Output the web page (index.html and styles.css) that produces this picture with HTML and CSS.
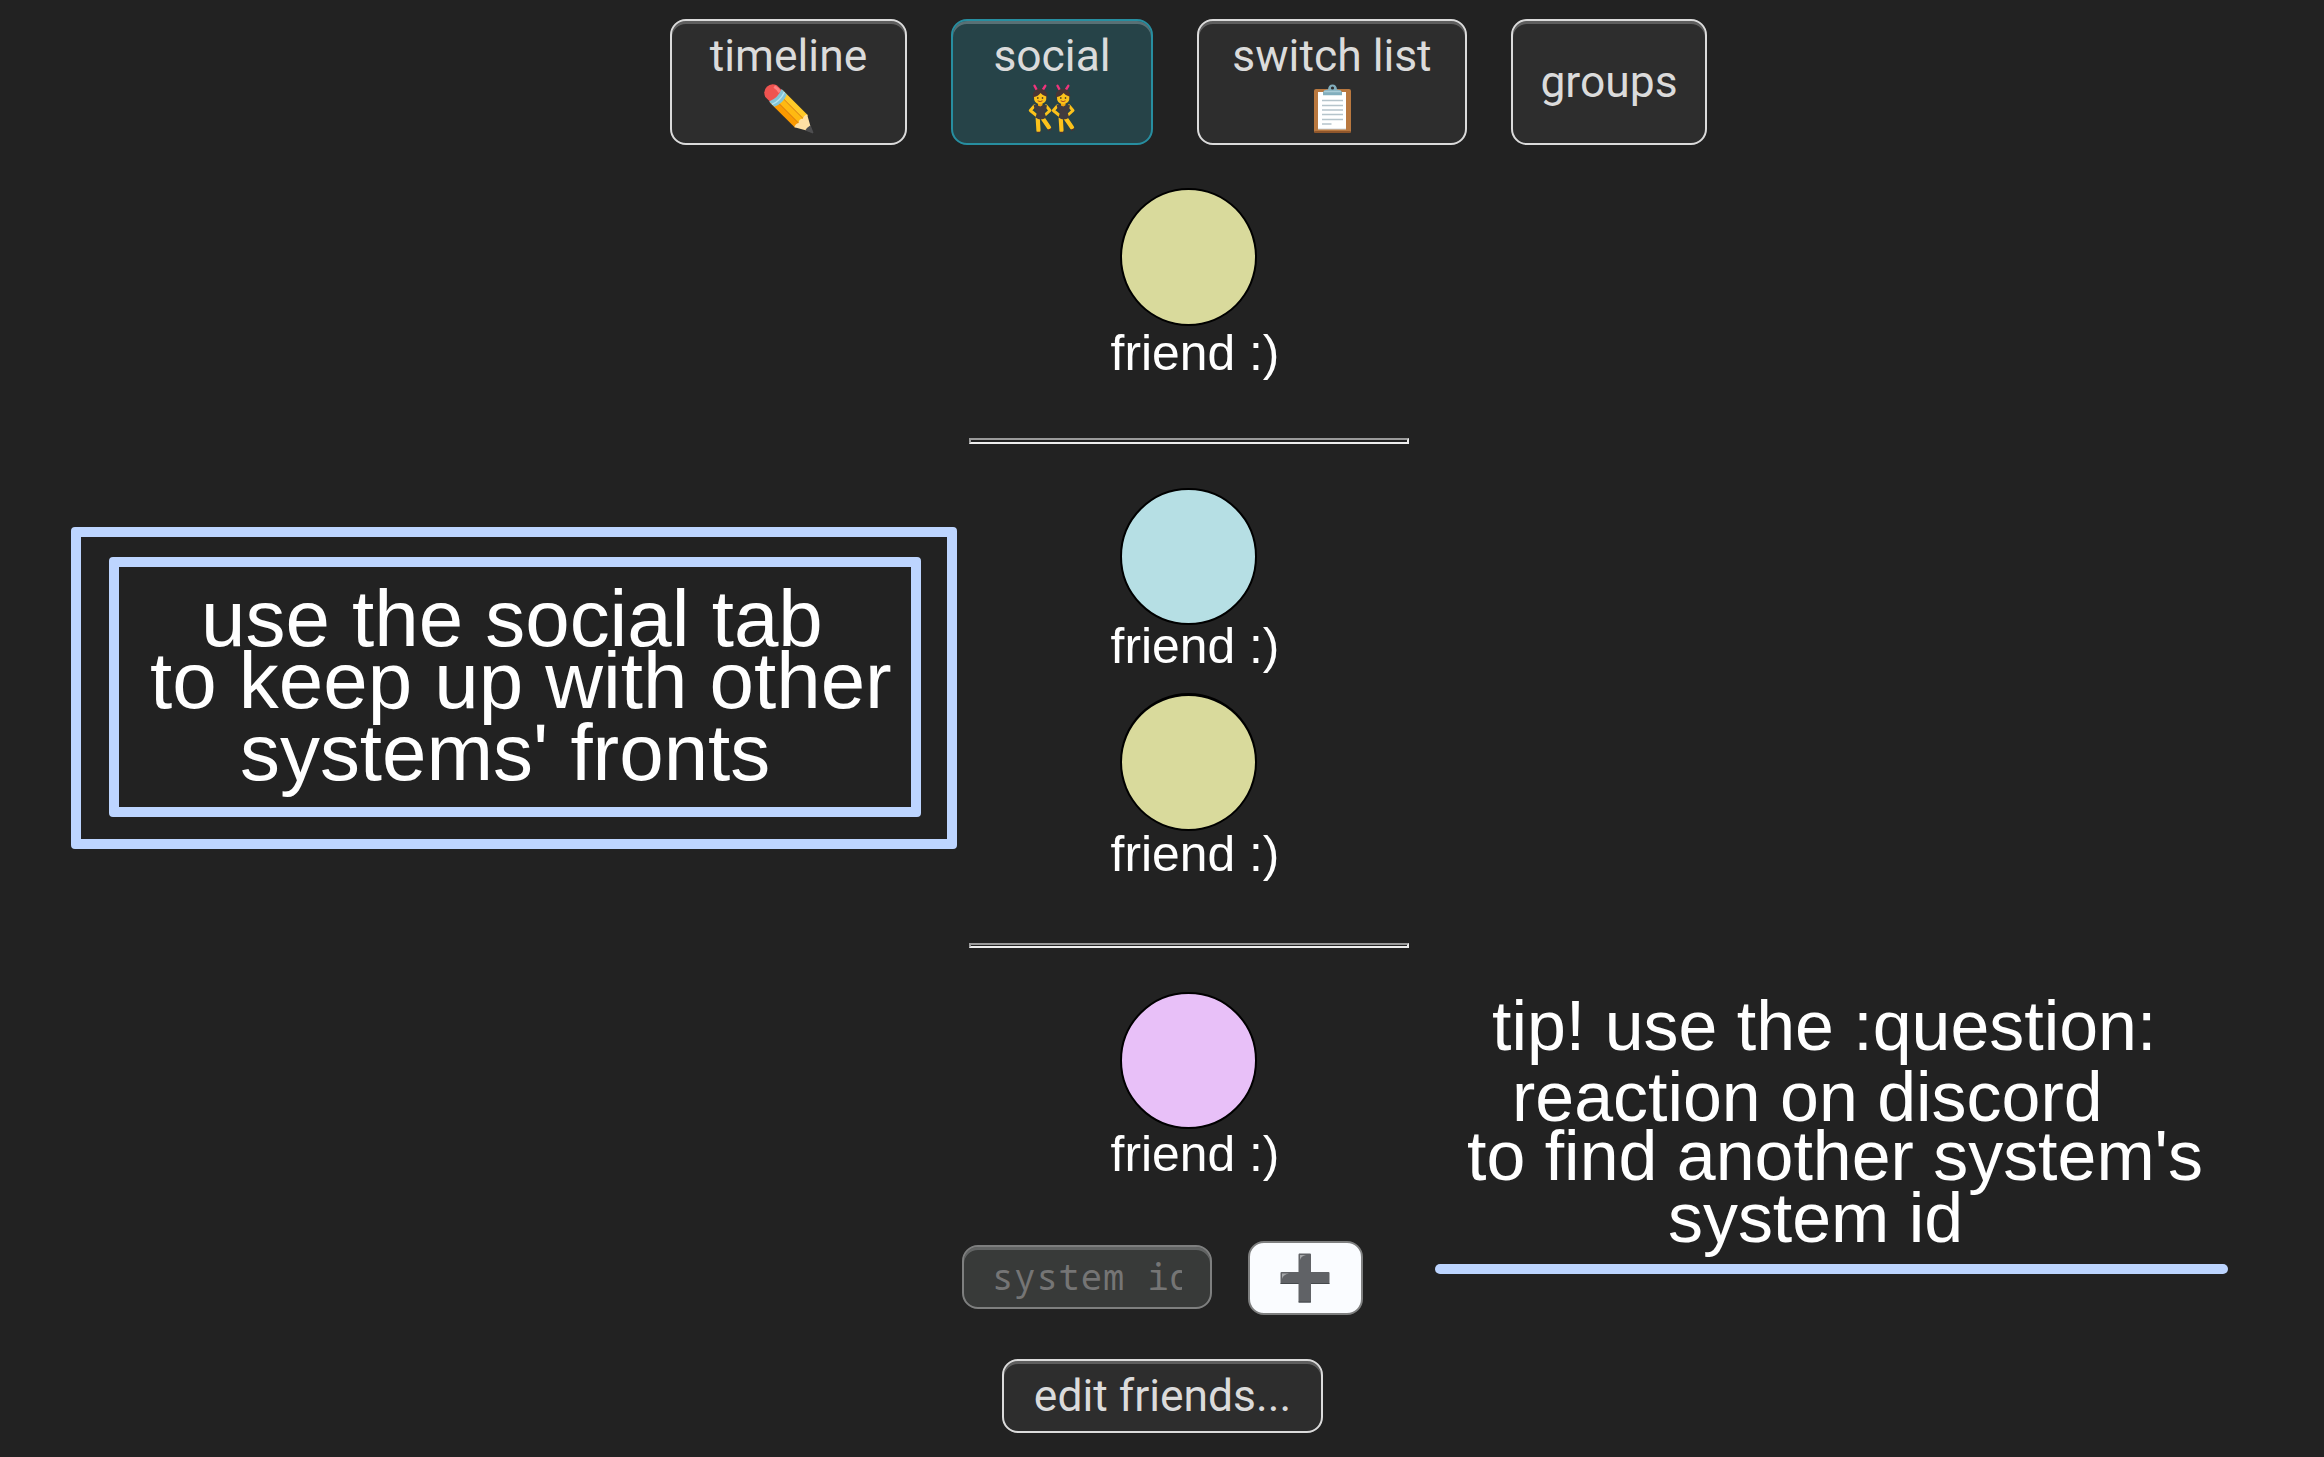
FILE: index.html
```html
<!DOCTYPE html>
<html lang="en">
<head>
<meta charset="utf-8">
<title>social</title>
<link rel="stylesheet" href="styles.css">
</head>
<body>
<nav class="tabs">
  <button class="btn tab tab-timeline"><span>timeline</span>
    <svg class="emoji" viewBox="0 0 50 50">
      <g transform="translate(8.5 8.5) rotate(45)">
        <path d="M5-9H41V-3.2H5z" fill="#ffca28"/>
        <path d="M5-3.2H41V3.2H5z" fill="#ffb911"/>
        <path d="M5 3.2H41V9H5z" fill="#fb9a00"/>
        <path d="M5-3.4H42M5 3H42" stroke="#f08a17" stroke-width=".8"/>
        <path d="M-2-8.2H8V8.2H-2Q-8 6-8 0T-2-8.2z" fill="#ef5350"/>
        <path d="M-3-5.5Q1-6.500 5-5.500" stroke="#ff8080" stroke-width="3" fill="none"/>
        <path d="M4-8.8Q8 0 4 8.8H11.5Q15 0 11.5-8.8z" fill="#82c4d5"/>
        <path d="M8-8.8Q11.5 0 8 8.8" stroke="#b5e3ee" stroke-width="1.5" fill="none"/>
        <path d="M40-9L56 0 40 9Q38 6 40 3Q37 0 40-3Q38-6 40-9z" fill="#ffe0a3"/>
        <path d="M50-3.8L57-.8Q58 0 57 .8L50 3.8Q49 0 50-3.8z" fill="#4e4e50"/>
      </g>
    </svg>
  </button>
  <button class="btn tab tab-social active"><span>social</span>
    <svg class="emoji" viewBox="0 0 50 50">
      <defs>
        <g id="dancer">
          <path d="M8 5.500L6 1.800M14.500 5.500L16.800 1.800" stroke="#f0347c" stroke-width="2.400" stroke-linecap="round"/>
          <ellipse cx="11.500" cy="11.500" rx="7.200" ry="6.800" fill="#4a3434"/>
          <path d="M6 21.800L1.800 26.500L8 31.500M17.500 21.800L21.500 26.500L16.500 31" fill="none" stroke="#fcc21b" stroke-width="3" stroke-linejoin="round" stroke-linecap="round"/>
          <path d="M9.500 18h4.500v5h-4.500z" fill="#f2a60d"/>
          <path d="M5.500 13Q9.500 12.500 12 9Q14 11.500 17.800 12.500Q18.500 19.500 11.700 20Q5 19.500 5.500 13z" fill="#fcc21b"/>
          <path d="M9.300 13.300v1.500M14 13.300v1.500" stroke="#3b2b25" stroke-width="1.400"/>
          <path d="M9.200 16.800q2.400 1.700 4.800 0" stroke="#a34b25" fill="none"/>
          <path d="M9.200 34L10 46.500M14 34L20.500 43.500" stroke="#fcc21b" stroke-width="4.200" stroke-linecap="round"/>
          <path d="M5 20.800Q8 20.500 11.800 22.500Q15 20.500 18.500 21.300Q18 26 16 28.500L17.800 33.500Q12 37.500 7 33.500L8.500 28.500Q5.500 25.500 5 20.800z" fill="#413b3e"/>
          <path d="M8.500 48.500h3.500M19.500 46.500l3.500-1.500" stroke="#4a3434" stroke-width="1.600"/>
        </g>
      </defs>
      <use href="#dancer" x="1.500"/>
      <use href="#dancer" x="24.500"/>
    </svg>
  </button>
  <button class="btn tab tab-switch"><span>switch list</span>
    <svg class="emoji" viewBox="0 0 50 50">
      <rect x="7" y="5" width="37" height="44" rx="2" fill="#b9783f"/>
      <path d="M7.500 48h36" stroke="#90562b" stroke-width="2"/>
      <path d="M11 8h28v37H11z" fill="#fff"/>
      <path d="M11 45h28" stroke="#d0d5d8"/>
      <path d="M15 16.500h21M15 21.500h21M15 26h21M15 30.500h21M15 35.500h21M15 40h9.500" stroke="#b5c4cb" stroke-width="1.500"/>
      <path d="M16 11.300V8Q17 5.500 21 5.500Q21.500 .5 25.500 .5T30 5.500Q34 5.500 35 8V11.300z" fill="#82aebd"/>
      <path d="M17 7.500h17" stroke="#a9ccd7" stroke-width="1.500"/>
      <circle cx="25.500" cy="4" r="1.600" fill="#2d2d2d"/>
    </svg>
  </button>
  <button class="btn tab tab-groups"><span>groups</span></button>
</nav>

<main class="layout">
  <aside class="note">
    <div class="note-inner">
      <p class="line n1">use the social tab</p>
      <p class="line n2">to keep up with other</p>
      <p class="line n3">systems' fronts</p>
    </div>
  </aside>

  <section class="friends">
    <figure class="friend f1"><div class="avatar tall lime"></div><figcaption>friend :)</figcaption></figure>
    <hr class="rule r1">
    <figure class="friend f2"><div class="avatar sky"></div><figcaption>friend :)</figcaption></figure>
    <figure class="friend f3"><div class="avatar tall lime"></div><figcaption>friend :)</figcaption></figure>
    <hr class="rule r2">
    <figure class="friend f4"><div class="avatar pink"></div><figcaption>friend :)</figcaption></figure>
    <form class="add">
      <input class="field" type="text" placeholder="system id">
      <button class="plus" type="button" aria-label="add">
        <svg width="50" height="50" viewBox="0 0 50 50">
          <path d="M19 .5H30Q31 .5 31 1.500V19H48.500Q49.500 19 49.500 20V30Q49.500 31 48.500 31H31V48.500Q31 49.500 30 49.500H19.500Q18.500 49.500 18.500 48.500V31H1.500Q.5 31 .5 30V20Q.5 19 1.500 19H18.500V1.500z" fill="#606266"/>
          <path d="M18.500 49H31M.5 30.500H18.500M31 30.500H49.500" stroke="#45494c" stroke-width="1.200"/>
          <path d="M20 7V2H26Q21 3 20 7zM2 26V20.500H9Q3 21.500 2 26z" fill="#a5a7a9"/>
        </svg>
      </button>
    </form>
    <button class="btn edit">edit friends...</button>
  </section>

  <aside class="tip">
    <p class="line t1">tip! use the :question:</p>
    <p class="line t2">reaction on discord</p>
    <p class="line t3">to find another system's</p>
    <p class="line t4">system id</p>
    <div class="underline"></div>
  </aside>
</main>
</body>
</html>
```
FILE: styles.css
```css
* { box-sizing: border-box; }

body {
  margin: 0;
  height: 1457px;
  overflow: hidden;
  background: #222;
  color: #fff;
  font-family: "Liberation Sans", Arial, sans-serif;
}

p, figure { margin: 0; }

/* Buttons */
.btn {
  border: 2px solid #dbdbdb;
  border-radius: 16px;
  background: #2d2d2d;
  box-shadow: inset 0 3px 0 #5e5e5e;
  color: #dbdbdb;
  font: 44.4px/50px Roboto, sans-serif;
  padding: 0;
}

/* Tabs */
.tabs {
  display: flex;
  gap: 44px;
  padding: 19px 0 0 670px;
}
.tab {
  display: flex;
  flex-direction: column;
  align-items: center;
  justify-content: center;
  gap: 3px;
  height: 126px;
}
.tab-timeline { width: 237px; }
.tab-social { width: 202px; }
.tab-switch { width: 270px; }
.tab-groups { width: 196px; }
.tab.active {
  background: #264348;
  border-color: #278ea0;
  box-shadow: inset 0 3px 0 #587075;
}
.emoji { width: 50px; height: 50px; }

/* Columns */
.layout {
  display: grid;
  grid-template-columns: 891px 454px 812px;
  padding-left: 71px;
}

.line { white-space: pre; }

/* Left note */
.note {
  width: 886px;
  height: 322px;
  margin-top: 382px;
  padding: 20px 26px 24px 28px;
  border: 10px solid #bdd5ff;
  border-radius: 4px;
}
.note-inner {
  height: 260px;
  padding-top: 21px;
  border: 10px solid #bdd5ff;
  border-radius: 4px;
  width: 812px;
  font-size: 79.9px;
  line-height: 62px;
}
.n1 { padding-left: 82px; }
.n2 { padding-left: 31px; }
.n3 { padding-left: 121px; margin-top: 10px; }

/* Friends */
.friends {
  display: flex;
  flex-direction: column;
  align-items: center;
  padding-top: 43px;
}
.friend {
  display: flex;
  flex-direction: column;
  align-items: center;
}
.friend figcaption {
  padding-left: 12px;
  font-size: 49.8px;
  line-height: 50px;
}
.avatar {
  width: 137px;
  height: 137px;
  border: 2px solid #000;
  border-radius: 50%;
}
.tall { height: 138px; }
.lime { background: #d9da9c; }
.sky { background: #b6dfe4; }
.pink { background: #e8c0f8; }
.f1 figcaption { margin-top: 2px; }
.f2 { margin-top: 44px; }
.f2 figcaption { margin-top: -4px; }
.f3 { margin-top: 22px; }
.f3 .avatar { border-top-width: 3px; }
.f3 figcaption { margin-top: -2px; }
.f4 { margin-top: 44px; }

.rule {
  width: 440px;
  margin: 0;
  border: 2px solid;
  border-color: #9a9a9a #eee #eee #9a9a9a;
}
.r1 { height: 6px; margin-top: 60px; }
.r2 { height: 5px; margin-top: 64px; }

/* Add form */
.add {
  display: flex;
  align-items: center;
  align-self: flex-start;
  gap: 36px;
  margin-top: 62px;
}
.field {
  width: 250px;
  height: 64px;
  margin-bottom: 2px;
  padding: 0 28px 3px;
  border: 2px solid #7e7f7f;
  border-radius: 16px;
  background: #383a39;
  box-shadow: inset 0 3px 0 #626464;
  font-family: "Noto Sans Mono", "DejaVu Sans Mono", monospace;
  font-size: 35.5px;
  letter-spacing: .9px;
}
.field::placeholder { color: #757575; opacity: 1; }
.plus {
  display: flex;
  align-items: center;
  justify-content: center;
  width: 115px;
  height: 74px;
  padding: 0 1px 0 0;
  border: 2px solid #7e7f7f;
  border-radius: 16px;
  background: #fafcff;
}
.edit {
  align-self: flex-start;
  width: 321px;
  height: 74px;
  margin: 44px 0 0 40px;
}

/* Right tip */
.tip {
  margin-top: 851px;
  padding-left: 19px;
  font-size: 69.9px;
  line-height: 60px;
}
.t1 { padding-left: 57px; }
.t2 { padding-left: 77px; margin-top: 11px; }
.t3 { padding-left: 32px; margin-top: -1px; }
.t4 { padding-left: 233px; margin-top: 2px; }
.underline {
  width: 793px;
  height: 10px;
  margin-top: 16px;
  border-radius: 5px;
  background: #bdd5ff;
}
```
